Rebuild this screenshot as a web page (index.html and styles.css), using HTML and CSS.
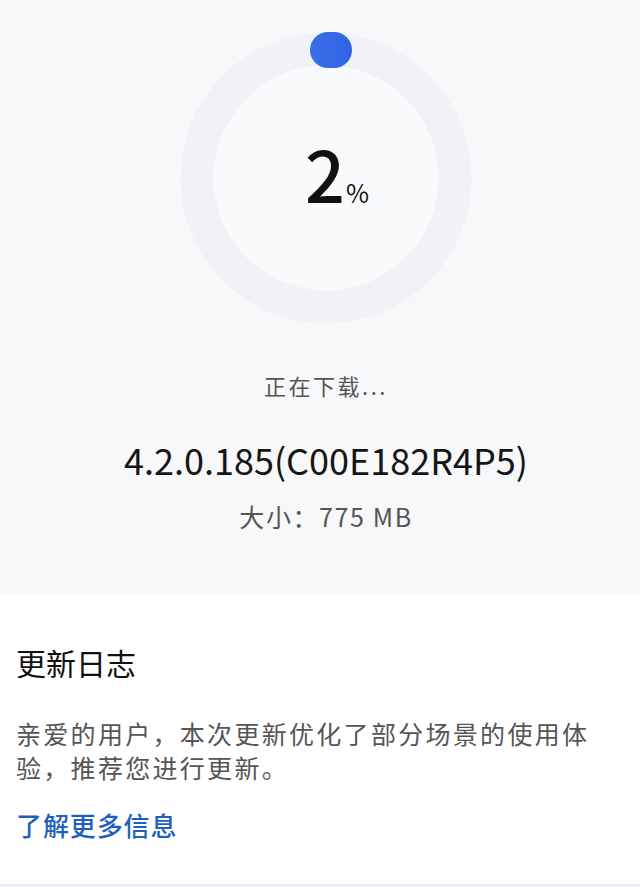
FILE: index.html
```html
<!DOCTYPE html>
<html lang="zh-CN">
<head>
<meta charset="utf-8">
<link rel="stylesheet" href="styles.css">
</head>
<body>
<main class="page">
  <section class="download">
    <div class="ring-wrap">
      <svg class="ring" width="300" height="300" viewBox="0 0 300 300">
        <defs>
          <linearGradient id="pillGrad" x1="0" y1="0" x2="1" y2="0">
            <stop offset="0" stop-color="#3b6fe6"/>
            <stop offset="1" stop-color="#2f63e3"/>
          </linearGradient>
        </defs>
        <circle cx="150" cy="150" r="129" fill="#f9fafc" stroke="#f1f2f5" stroke-width="33"/>
        <rect x="134" y="4" width="42" height="36" rx="18" fill="url(#pillGrad)"/>
      </svg>
      <div class="percent"><span class="num">2</span><span class="sign">%</span></div>
    </div>
    <p class="status">正在下载...</p>
    <p class="version">4.2.0.185(C00E182R4P5)</p>
    <p class="size">大小：775 MB</p>
  </section>
  <section class="changelog">
    <h2 class="log-title">更新日志</h2>
    <p class="log-text">亲爱的用户，本次更新优化了部分场景的使用体验，推荐您进行更新。</p>
    <a class="log-link" href="#">了解更多信息</a>
  </section>
</main>
</body>
</html>
```
FILE: styles.css
```css
* { box-sizing: border-box; }
html, body {
  margin: 0;
  padding: 0;
}
body {
  width: 640px;
  height: 887px;
  background: #f7f8fa;
  font-family: "Noto Sans CJK SC", "Noto Sans", sans-serif;
  overflow: hidden;
}
.page {
  display: flex;
  flex-direction: column;
  height: 887px;
}
.download {
  height: 593px;
  padding-top: 28px;
  padding-left: 12px;
  display: flex;
  flex-direction: column;
  align-items: center;
}
.ring-wrap {
  position: relative;
  width: 300px;
  height: 300px;
}
.ring { display: block; }
.percent {
  position: absolute;
  left: 129px;
  top: 105px;
  display: flex;
  align-items: baseline;
  color: #111;
}
.num {
  font-size: 70px;
  line-height: 80px;
  font-weight: 500;
}
.sign {
  font-size: 25px;
  margin-left: 1px;
}
.status {
  margin: 41px 0 0;
  font-size: 22px;
  line-height: 32px;
  letter-spacing: 2.5px;
  color: #555;
}
.version {
  margin: 35px 0 0;
  font-size: 36px;
  line-height: 46px;
  color: #151515;
}
.size {
  margin: 17px 0 0;
  font-size: 25px;
  line-height: 34px;
  letter-spacing: 1.6px;
  color: #555;
}
.changelog {
  flex: 1;
  background: #fff;
  border-bottom: 3px solid #eceef1;
  padding: 49px 16px 0;
}
.log-title {
  margin: 0;
  font-size: 30px;
  line-height: 40px;
  font-weight: 400;
  color: #111;
}
.log-text {
  margin: 34px 0 0;
  max-width: 590px;
  font-size: 25px;
  line-height: 34px;
  letter-spacing: 2.3px;
  color: #555;
}
.log-link {
  display: inline-block;
  margin-top: 24px;
  font-size: 26px;
  line-height: 34px;
  letter-spacing: 0.9px;
  font-weight: 500;
  color: #1f5fbf;
  text-decoration: none;
}
```
